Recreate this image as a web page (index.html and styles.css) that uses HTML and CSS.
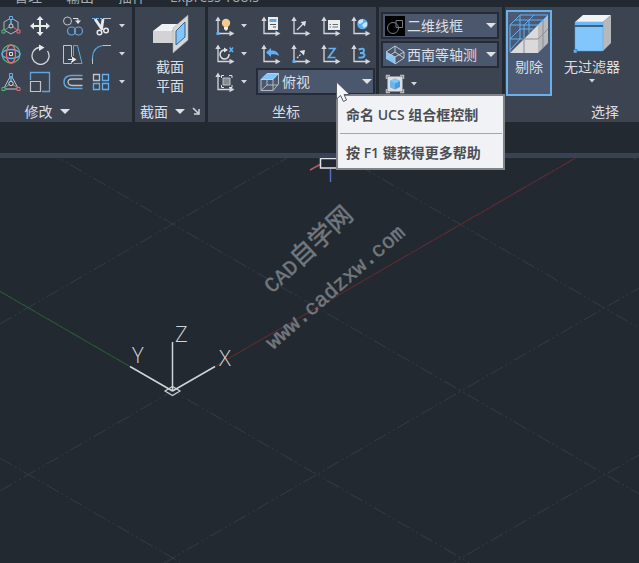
FILE: index.html
```html
<!DOCTYPE html>
<html lang="zh-CN">
<head>
<meta charset="utf-8">
<title>CAD</title>
<link rel="stylesheet" href="styles.css">
</head>
<body>
<svg class="defs" aria-hidden="true">
  <defs>
    <g id="axes"><path d="M4 3V18.500H18" fill="none" stroke="#d4d6d9" stroke-width="1.300"/><path d="M1.300 6L4 1.500L6.700 6ZM15.500 15.800L20.500 18.500L15.500 21.200Z" fill="#d4d6d9"/></g>
    <path id="down" d="M0 0H6L3 3.500Z" fill="#d4d6d9"/>
    <path id="down-big" d="M0 0H10L5 5Z" fill="#dfe1e4"/>
  </defs>
</svg>

<nav class="tabs">
  <a href="#">管理</a><a href="#">输出</a><a href="#">插件</a><a href="#">Express Tools</a>
</nav>

<header class="ribbon">
  <section class="panel modify">
    <div class="tools modify-tools">
      <button aria-label="三维移动"><svg class="ico" viewBox="0 0 22 22" fill="none"><path d="M11 3L18 7V15L11 19L4 15V7Z" stroke="#aeb3ba"/><path d="M11 5V9" stroke="#62b0f2" stroke-width="1.500"/><path d="M9 12L5 15" stroke="#50b878"/><path d="M13 12L17 15" stroke="#ee6a72"/><circle cx="11" cy="11" r="2" stroke="#d4d6d9"/><path d="M9.500 1.500H12.500V4.500H9.500Z" fill="#3c4452" stroke="#62b0f2"/><path d="M2 15H5V18H2Z" fill="#3c4452" stroke="#50b878"/><path d="M17 15H20V18H17Z" fill="#3c4452" stroke="#ee6a72"/></svg></button>
      <button aria-label="移动"><svg class="ico" viewBox="0 0 22 22"><path d="M11 1L14.500 5H12V10H17V7.500L21 11L17 14.500V12H12V17H14.500L11 21L7.500 17H10V12H5V14.500L1 11L5 7.500V10H10V5H7.500Z" fill="#e8e9eb"/></svg></button>
      <button aria-label="复制"><svg class="ico" viewBox="0 0 22 22" fill="none"><circle cx="5.500" cy="6" r="4" stroke="#c0c4c9"/><path d="M11 3.500H16V6" stroke="#e2e3e5"/><path d="M13 5.500H19L16 9Z" fill="#e2e3e5"/><circle cx="9.500" cy="16" r="4" stroke="#62a5dc" stroke-width="1.200"/><circle cx="16.500" cy="16" r="4" stroke="#62a5dc" stroke-width="1.200"/></svg></button>
      <button aria-label="修剪"><svg class="ico" viewBox="0 0 22 22" fill="none"><path d="M2 3.500H12" stroke="#62b0f2" stroke-dasharray="3 1"/><path d="M13 3.500H21" stroke="#c0c4c9"/><path d="M5 4L12.500 15M13 4L11.500 14" stroke="#e8e9eb" stroke-width="2.800"/><circle cx="9.500" cy="17.500" r="2.300" stroke="#e8e9eb" stroke-width="1.500"/><circle cx="16" cy="15.500" r="2.300" stroke="#e8e9eb" stroke-width="1.500"/></svg></button>
      <button aria-label="修剪选项"><svg class="caret" viewBox="0 0 6 4"><use href="#down"/></svg></button>

      <button aria-label="三维旋转"><svg class="ico" viewBox="0 0 22 22" fill="none"><circle cx="11" cy="11" r="9" stroke="#50b878" stroke-width="1.300"/><ellipse cx="11" cy="11" rx="9" ry="4.500" stroke="#62b0f2" stroke-width="1.300"/><ellipse cx="11" cy="11" rx="4.500" ry="9" stroke="#ee6a72" stroke-width="1.300"/><path d="M9.500 9.500H12.500V12.500H9.500Z" fill="#3c4452" stroke="#e2e3e5"/></svg></button>
      <button aria-label="旋转"><svg class="ico" viewBox="0 0 22 22" fill="none"><path d="M18.500 8A8.500 8.500 0 1 1 10 4.500" stroke="#d4d6d9" stroke-width="1.300"/><path d="M10 1.500L15.500 4.500L10 8Z" fill="#e8e9eb"/></svg></button>
      <button aria-label="拉伸"><svg class="ico" viewBox="0 0 22 22" fill="none"><path d="M9.500 18V20.500H1.500V2.500H9.500V14" stroke="#c0c4c9"/><path d="M11.500 2.500H15.500L20 20.500H11.500M11.500 2.500V13" stroke="#62a5dc"/><path d="M6 16.500H11" stroke="#e8e9eb"/><path d="M10 13.500L14.500 16.500L10 19.500Z" fill="#e8e9eb"/></svg></button>
      <button aria-label="圆角"><svg class="ico" viewBox="0 0 22 22" fill="none"><path d="M2.500 17V14Q3 4 13 2.500" stroke="#62a5dc" stroke-width="1.200"/><path d="M13 2.500H21M2.500 16V21" stroke="#c0c4c9"/></svg></button>
      <button aria-label="圆角选项"><svg class="caret" viewBox="0 0 6 4"><use href="#down"/></svg></button>

      <button aria-label="三维缩放"><svg class="ico" viewBox="0 0 22 22" fill="none"><path d="M11 4L3.500 18H18.500Z" stroke="#c0c4c9"/><path d="M11 5V10" stroke="#62b0f2" stroke-width="1.500"/><path d="M10 13L4 17" stroke="#50b878"/><path d="M12 13L18 17" stroke="#ee6a72"/><circle cx="11" cy="12.500" r="2.200" stroke="#d4d6d9"/><path d="M9.500 2.500H12.500V5.500H9.500Z" fill="#3c4452" stroke="#62b0f2"/><path d="M2 16.500H5V19.500H2Z" fill="#3c4452" stroke="#50b878"/><path d="M17 16.500H20V19.500H17Z" fill="#3c4452" stroke="#ee6a72"/></svg></button>
      <button aria-label="缩放"><svg class="ico" viewBox="0 0 22 22" fill="none"><path d="M1.500 9V1.500H20.500V20.500H13" stroke="#62a5dc" stroke-width="1.300"/><path d="M1.500 10.500H11.500V20.500H1.500Z" stroke="#c0c4c9" stroke-width="1.200"/></svg></button>
      <button aria-label="偏移"><svg class="ico" viewBox="0 0 22 22" fill="none"><path d="M20.500 4.500H9Q2 5 2 11T9 17.500H20.500" stroke="#62a5dc" stroke-width="1.500"/><path d="M20.500 8H10Q6 8 6 11T10 14.500H20.500" stroke="#c0c4c9" stroke-width="1.300"/></svg></button>
      <button aria-label="阵列"><svg class="ico" viewBox="0 0 22 22" fill="none" stroke-width="1.300"><path d="M3.500 3.500H9.500V9.500H3.500Z" stroke="#c0c4c9"/><path d="M12.500 3.500H18.500V9.500H12.500ZM3.500 12.500H9.500V18.500H3.500ZM12.500 12.500H18.500V18.500H12.500Z" stroke="#62b0f2"/></svg></button>
      <button aria-label="阵列选项"><svg class="caret" viewBox="0 0 6 4"><use href="#down"/></svg></button>
    </div>
    <h2 class="title"><span>修改</span><svg class="caret-big" viewBox="0 0 10 5"><use href="#down-big"/></svg></h2>
  </section>

  <section class="panel section">
    <button class="big">
      <svg class="big-ico" viewBox="0 0 40 40"><path d="M3 17L12 10H30L22 17Z" fill="#f1f2f4"/><path d="M3 17H23V29H3Z" fill="#d3d3d5"/><path d="M23 14L38 1V26L23 39Z" fill="#d6d6d4" stroke="#a5a7a8" stroke-width=".500"/><path d="M26 17L35 8V23L26 31Z" fill="#83c6fb" stroke="#33658f"/></svg>
      <span>截面<br>平面</span>
    </button>
    <h2 class="title"><span>截面</span><svg class="caret-big" viewBox="0 0 10 5"><use href="#down-big"/></svg><svg class="launch" viewBox="0 0 8 8"><path d="M1 1L6 6M7 2V7H2" fill="none" stroke="#d4d6d9" stroke-width="1.500"/></svg></h2>
  </section>

  <section class="panel coords">
    <div class="coords-body">
      <div class="tools ucs-left">
        <button aria-label="UCS 图标"><svg class="ico" viewBox="0 0 22 22"><use href="#axes"/><path d="M2.500 17H5.500V20H2.500Z" fill="#62b0f2"/><circle cx="12" cy="8" r="4.200" fill="#f6c98d"/><path d="M10 12H14V14L12 16L10 14Z" fill="#f0f0f0"/></svg></button>
        <button aria-label="UCS 图标选项"><svg class="caret" viewBox="0 0 6 4"><use href="#down"/></svg></button>
        <button aria-label="绕 X 轴旋转"><svg class="ico" viewBox="0 0 22 22"><use href="#axes"/><path d="M11 7A4.500 4.500 0 1 0 15 11" fill="none" stroke="#e2e3e5" stroke-width="1.500"/><path d="M10 4.500L14 7L10 9.500Z" fill="#e2e3e5"/><path d="M15.500 4.500L19 9M19 4.500L15.500 9" stroke="#62b0f2" stroke-width="1.500"/></svg></button>
        <button aria-label="旋转选项"><svg class="caret" viewBox="0 0 6 4"><use href="#down"/></svg></button>
        <button aria-label="视图 UCS"><svg class="ico" viewBox="0 0 22 22"><use href="#axes"/><path d="M9 7H16V14H9Z" fill="#858a90" stroke="#c0c4c9"/><path d="M7.500 7V4.500H10M15 4.500H18V7M18 14V16.500H15M7.500 14V16.500H10" fill="none" stroke="#e2e3e5"/></svg></button>
        <button aria-label="视图 UCS 选项"><svg class="caret" viewBox="0 0 6 4"><use href="#down"/></svg></button>
      </div>
      <div class="ucs-right">
        <div class="tools ucs-grid">
          <button aria-label="UCS"><svg class="ico" viewBox="0 0 22 22"><use href="#axes"/><path d="M8 2H18V15H8Z" fill="#eceded"/><path d="M9.500 4H16.500V7H9.500Z" fill="#62a5dc"/><path d="M10 9.500H16M13 12H16" stroke="#50565f"/></svg></button>
          <button aria-label="原点"><svg class="ico" viewBox="0 0 22 22"><use href="#axes"/><path d="M7 15L13 9" stroke="#d4d6d9" stroke-width="1.300"/><path d="M16 6L15 11.500L10.500 7Z" fill="#e2e3e5"/></svg></button>
          <button aria-label="已命名"><svg class="ico" viewBox="0 0 22 22"><use href="#axes"/><path d="M8 5H20V15H8Z" fill="#eceded"/><path d="M9.500 9.500H11M12.500 9.500H18M9.500 12H11M12.500 12H18" stroke="#69707a"/></svg></button>
          <button aria-label="世界"><svg class="ico" viewBox="0 0 22 22"><use href="#axes"/><circle cx="12.500" cy="9" r="5.300" fill="#5aadf0"/><path d="M9 5L13 4L13 7L10 9L8 8ZM14 8L17 7L17 11L14 13L12 10Z" fill="#c8e6fd"/></svg></button>
          <button aria-label="上一个"><svg class="ico" viewBox="0 0 22 22"><use href="#axes"/><path d="M6 9.500L11 5V7.500Q18 7 19 13Q16 10.500 11 11.500V14Z" fill="#62b0f2"/></svg></button>
          <button aria-label="Z 轴矢量"><svg class="ico" viewBox="0 0 22 22"><use href="#axes"/><path d="M2.500 17H5.500V20H2.500Z" fill="#62b0f2"/><path d="M7 15L11 11" stroke="#d4d6d9" stroke-width="1.300" stroke-dasharray="2 1"/><path d="M15 7L14 12.500L9.500 8Z" fill="#e2e3e5"/></svg></button>
          <button aria-label="Z"><svg class="ico" viewBox="0 0 22 22"><use href="#axes"/><path d="M8.500 5.500H15L8.500 14.500H15.500" fill="none" stroke="#62b0f2" stroke-width="1.700"/></svg></button>
          <button aria-label="三点"><svg class="ico" viewBox="0 0 22 22"><use href="#axes"/><path d="M8.500 6.500Q14 4.500 14 7.500T10 10Q15 10 14.500 12.500T8.500 14.500" fill="none" stroke="#62b0f2" stroke-width="1.900"/></svg></button>
        </div>
        <div class="combo">
          <svg class="combo-ico" viewBox="0 0 20 20" fill="none"><path d="M1 7.500V18.500H13V7.500M13 18.500L18.500 12V1.500M7 7V13H18M7 13L1 18.500" stroke="#b5bac1"/><path d="M1 7.500L7 1.500H18.500L13 7.500Z" fill="#83c6fb" stroke="#a9d6fa"/></svg>
          <select aria-label="命名 UCS 组合框控制"><option>俯视</option></select>
          <svg class="caret-big" viewBox="0 0 10 5"><use href="#down-big"/></svg>
        </div>
      </div>
    </div>
    <h2 class="title with-launch"><span>坐标</span></h2>
  </section>

  <section class="panel view">
    <div class="view-body">
      <div class="combo">
        <svg class="combo-ico" viewBox="0 0 20 20" fill="none"><path d="M0 0H20V20H0Z" fill="#000"/><circle cx="8" cy="12" r="5.500" stroke="#777c83"/><path d="M11 4.500H17.500V11.500H11Z" stroke="#777c83"/></svg>
        <select aria-label="视觉样式"><option>二维线框</option></select>
        <svg class="caret-big" viewBox="0 0 10 5"><use href="#down-big"/></svg>
      </div>
      <div class="combo">
        <svg class="combo-ico" viewBox="0 0 20 20" fill="none"><path d="M1 7L10 12V19L1 14Z" fill="#83c6fb"/><path d="M1 7L10 1L19 7L10 12ZM10 12V19L19 13V7M10 1V7L1 13M10 7L19 13" stroke="#c5c9ce"/></svg>
        <select aria-label="视图"><option>西南等轴测</option></select>
        <svg class="caret-big" viewBox="0 0 10 5"><use href="#down-big"/></svg>
      </div>
      <div class="tools view-tools">
        <button aria-label="视口"><svg class="ico" viewBox="0 0 22 22"><path d="M3.500 3.500H18.500V18.500H3.500Z" fill="#dcdddd"/><path d="M2.500 6V2.500H6M16 2.500H19.500V6M19.500 16V19.500H16M6 19.500H2.500V16" fill="none" stroke="#b5b9be" stroke-width="1.500"/><path d="M6 8L11 5.500L16 8V14L11 16.500L6 14Z" fill="#4b9cdb"/><path d="M6 8L11 5.500L16 8L11 10.500Z" fill="#83c6fb"/><path d="M6 8L11 10.500V16.500L6 14Z" fill="#6cb6ef"/></svg></button>
        <button aria-label="视口选项"><svg class="caret" viewBox="0 0 6 4"><use href="#down"/></svg></button>
      </div>
    </div>
  </section>

  <section class="panel selection">
    <div class="selection-body">
      <button class="big active">
        <svg class="big-ico" viewBox="0 0 40 40" fill="none"><path d="M29 11L39 1V29L29 39Z" fill="#b9babb"/><path d="M29 11V39H1Z" fill="#dadada"/><path d="M15 25H29M15 26V39M29 25L39 15M34 6V34" stroke="#8b8e93"/><path d="M1 38V11H29L39 1H11L1 11M15 24V11L25 1M6 6H34M1 25H14M11 1V25L1 36M1 25L11 15H24M20 6V19" stroke="#62b0f2"/></svg>
        <span>剔除</span>
      </button>
      <button class="big filter">
        <svg class="big-ico" viewBox="0 0 40 40"><path d="M3 8L11 1H39L31 8Z" fill="#f2f3f5"/><path d="M31 8L39 1V29L31 37Z" fill="#b7b8ba"/><path d="M3 8H31V37H3Z" fill="#83c6fb" stroke="#5d9fd0" stroke-width=".500"/><path d="M3 12H31" stroke="#27435e" stroke-width="1.500"/><path d="M3 8.500H31V11H3Z" fill="#69b7f6"/><path d="M1.500 35.500H5V39H1.500Z" fill="#62b0f2" stroke="#33506c" stroke-width=".500"/></svg>
        <span>无过滤器</span>
        <svg class="caret" viewBox="0 0 6 4"><use href="#down"/></svg>
      </button>
    </div>
    <h2 class="title"><span>选择</span></h2>
  </section>
</header>

<main class="viewport">
  <svg class="drawing" viewBox="0 158 639 405" preserveAspectRatio="xMinYMin slice" fill="none">
    <g class="grid">
      <path d="M0 458L639 828M0 291L639 661M0 124L639 494M172 57L639 328M461 57L639 161"/>
      <path d="M0 324L639 -46M0 491L639 121M0 658L639 288M0 825L639 455"/>
    </g>
    <path d="M172 391L576 158" stroke="#6b252d"/>
    <path d="M172 391L0 291.500" stroke="#23602f"/>
    <path d="M310 170L321 164" stroke="#b55a5d" stroke-width="1.500"/>
    <path d="M330.500 169V182" stroke="#5272c0" stroke-width="1.500"/>
    <path d="M320.500 158.500H350V168H320.500Z" stroke="#e0e2e5" stroke-width="1.500"/>
    <g stroke="#cfd3d7" stroke-width="1.500">
      <path d="M172.500 391V342M172.500 391L130 366.500M172.500 391L215 366.500"/>
      <path d="M165 391L172.500 386.500L180 391L172.500 395.500Z" stroke-width="1.200"/>
    </g>
    <g class="axis-names">
      <text x="132" y="363">Y</text>
      <text x="175" y="342">Z</text>
      <text x="219" y="366">X</text>
    </g>
    <g class="mark">
      <text transform="translate(272 294) rotate(-43)">CAD<tspan class="mark-cjk">自学网</tspan></text>
      <text transform="translate(273 350) rotate(-41)">www.cadzxw.com</text>
    </g>
  </svg>
</main>

<div class="tooltip" role="tooltip">
  <p>命名 UCS 组合框控制</p>
  <p>按 F1 键获得更多帮助</p>
</div>
<svg class="cursor" viewBox="0 0 15 22"><path d="M.500 1V18L4.500 14.500L7.500 20.500L10.500 19L8 13.500H13.500Z" fill="#f4f5f7" stroke="#555b64"/></svg>
</body>
</html>
```
FILE: styles.css
```css
* { box-sizing: border-box; }

body {
  margin: 0;
  min-height: 100vh;
  display: flex;
  flex-direction: column;
  position: relative;
  overflow: hidden;
  background: #222930;
  color: #dcdee1;
  font: 14px/19px "Open Sans", "Noto Sans CJK SC", sans-serif;
}

button, select { font: inherit; color: inherit; }

button {
  padding: 0;
  border: 0;
  background: none;
  display: flex;
  align-items: center;
  justify-content: center;
}

svg { display: block; flex: none; }

.defs { position: absolute; width: 0; height: 0; }

.tabs {
  display: flex;
  align-items: flex-end;
  gap: 24px;
  height: 7px;
  padding-left: 14px;
  overflow: hidden;
}

.tabs a {
  color: #a9adb3;
  text-decoration: none;
  line-height: 20px;
  white-space: nowrap;
}

.ribbon {
  display: flex;
  gap: 3px;
  height: 115px;
  overflow: hidden;
}

.panel {
  flex: none;
  display: flex;
  flex-direction: column;
  background: #3c4452;
}

.modify { width: 132px; }
.section { width: 70px; }
.coords { width: 168px; }
.view { width: 123px; }
.selection { width: 200px; flex-grow: 1; }

.title {
  margin: auto 0 0;
  height: 22px;
  display: flex;
  align-items: center;
  justify-content: center;
  gap: 7px;
  font-size: 14px;
  font-weight: 400;
}

.modify .title { padding-right: 38px; }
.section .title { justify-content: flex-start; padding-left: 5px; }
.with-launch { padding-right: 12px; }

.tools { display: grid; grid-auto-rows: 28px; }
.modify-tools { padding-top: 5px; grid-template-columns: 21px 37px 30px 26px 15px; }

.ico { width: 22px; height: 22px; }
.caret { width: 6px; height: 4px; }
.caret-big { width: 10px; height: 5px; }
.launch { width: 8px; height: 8px; }

.big {
  flex-direction: column;
  justify-content: flex-start;
  gap: 3px;
}

.big-ico { width: 40px; height: 40px; }

.section .big { padding-top: 7px; }

.coords-body { display: flex; padding: 5px 1px 0 6px; }
.ucs-left { grid-template-columns: 22px 16px; flex: 1; align-content: start; }
.ucs-right { width: 119px; }
.ucs-grid { grid-template-columns: repeat(4, 30px); }

.combo {
  display: flex;
  align-items: center;
  height: 27px;
  padding: 0 1px 0 2px;
  border: 2px solid #252c38;
  background: #4a576c;
}

.combo-ico { width: 20px; height: 20px; }

.combo select {
  flex: 1;
  min-width: 0;
  padding: 0 0 0 2px;
  border: 0;
  background: none;
  appearance: none;
}

.view-body { padding: 5px 3px 0 2px; display: grid; gap: 2px; }
.view-tools { grid-template-columns: 28px 10px; }

.selection-body { display: flex; gap: 6px; padding: 3px 1px 0; }
.selection .big { height: 86px; }
.active { width: 46px; padding-top: 2px; border: 2px solid #6bb0ea; background: #4b5a72; }
.filter { width: 68px; padding-top: 4px; }

.viewport {
  flex: 1;
  margin-top: 31px;
  border-top: 5px solid #394252;
  display: flex;
  min-height: 0;
}

.drawing { width: 100%; height: 100%; }

.grid { stroke: #323c49; stroke-dasharray: 14 3 2 3 2 3; }

.axis-names { font: 300 22px "Open Sans", sans-serif; fill: #cfd3d7; }

.mark { font: 21px "Liberation Mono", monospace; fill: #72777e; stroke: #72777e; stroke-width: .5px; }
.mark-cjk { font-family: "Noto Sans CJK SC", sans-serif; font-size: 25px; }

.tooltip {
  position: absolute;
  left: 336px;
  top: 94px;
  padding: 0 1px 0 2px;
  border: 2px solid #808488;
  background: #f1f2f6;
  color: #4a4d52;
  font-weight: 600;
}

.tooltip p { margin: 0; padding: 9px 21px 9px 6px; }
.tooltip p + p { border-top: 1px solid #a2a5aa; padding-bottom: 6px; }

.cursor { position: absolute; left: 336px; top: 81px; width: 15px; height: 22px; }
```
